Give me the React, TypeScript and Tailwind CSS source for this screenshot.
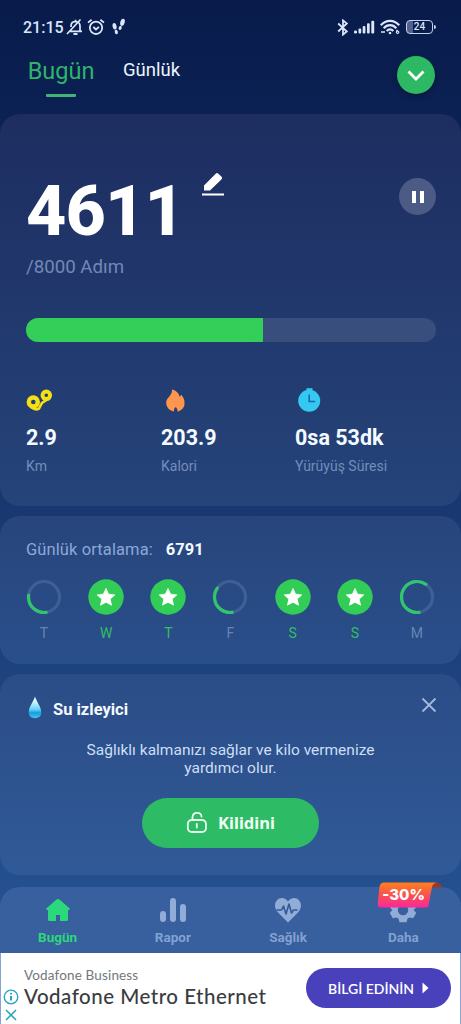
import React from 'react';

const days = [
  { label: 'T', progress: 0.29 },
  { label: 'W', progress: 1 },
  { label: 'T', progress: 1 },
  { label: 'F', progress: 0.37 },
  { label: 'S', progress: 1 },
  { label: 'S', progress: 1 },
  { label: 'M', progress: 0.62 },
];

const StatusBar: React.FC = () => (
  <div className="flex h-[54px] items-center pl-[23px] pr-[25px] text-[#dbe6fb]">
    <span className="w-[43px] whitespace-nowrap pt-px text-[16px] font-medium">21:15</span>
    {/* Muted bell */}
    <svg width="17" height="18" viewBox="0 0 17 18" className="-mt-px" fill="none" stroke="currentColor" strokeWidth="1.700">
      <path d="M4 13.300h12M14 13V8c0-2.700-1.500-4.300-4.500-4.500C6.800 3.500 5 5 5 8v1M9.500 3.500V1.800M1 16 14.500 1.500" />
      <path d="M7.500 16h4" strokeWidth="2" />
    </svg>
    {/* Alarm */}
    <svg width="18" height="18" viewBox="0 0 18 18" className="ml-[4px] -mt-px" fill="none" stroke="currentColor" strokeWidth="1.800">
      <circle cx="9" cy="9.800" r="6.200" />
      <path d="M1 4.600 4.600 1.800M17 4.600 13.400 1.800M6.300 9l2.700 2.500L12 8.800" />
    </svg>
    {/* Footsteps */}
    <svg width="14" height="17" viewBox="0 0 14 17" className="ml-[7px] -mt-px" fill="currentColor">
      <ellipse cx="2.600" cy="8.300" rx="2" ry="3.300" transform="rotate(-12 2.600 8.300)" />
      <ellipse cx="4.300" cy="14" rx="1.600" ry="2.200" transform="rotate(-12 4.300 14)" />
      <ellipse cx="10.500" cy="4.300" rx="2.200" ry="3.700" transform="rotate(14 10.500 4.300)" />
      <ellipse cx="8.200" cy="10" rx="1.500" ry="2" transform="rotate(20 8.200 10)" />
    </svg>
    <div className="ml-auto flex items-center">
      <svg width="12" height="17" viewBox="0 0 12 17" fill="none" stroke="currentColor" strokeWidth="1.800">
        <path d="m1.200 4.500 8.600 8L6 15.600V1.400l3.800 3.100-8.600 8" />
      </svg>
      <svg width="21" height="14" viewBox="0 0 21 14" className="ml-[5px]" fill="currentColor">
        <rect x="0" y="10.500" width="3" height="3" rx="1.200" />
        <rect x="4.500" y="8.500" width="2.700" height="5" rx="1" />
        <rect x="8.700" y="6" width="2.700" height="7.500" rx="1" />
        <rect x="13" y="3.300" width="2.700" height="10.200" rx="1" />
        <rect x="17.300" y="0.800" width="2.900" height="12.700" rx="1" />
      </svg>
      <svg width="20" height="16" viewBox="0 0 20 16" className="ml-[5px]" fill="none" stroke="currentColor" strokeWidth="2.200">
        <path d="M.8 6.200C6 .4 14 .4 19.200 6.200M3.700 9.200c3.600-4 9-4 12.600 0M6.700 12c2-2.200 4.600-2.200 6.600 0" />
        <circle cx="10" cy="14" r="1.300" fill="currentColor" stroke="none" />
        <circle cx="17.600" cy="13.200" r="1.200" strokeWidth="1.200" />
        <path d="M17 10.800v2M1 13h4" strokeWidth="1.400" />
      </svg>
      <div className="ml-[6px] flex h-[14px] w-[27px] items-center justify-center rounded-[4px] border-[1.5px] border-[#c5d1ec] bg-linear-to-r from-[#53628d] from-25% to-transparent to-25% text-[10px] leading-none font-medium">
        24
      </div>
      <div className="ml-px h-[4px] w-[2px] rounded-r bg-[#c5d1ec]" />
    </div>
  </div>
);

const Header: React.FC = () => (
  <div className="flex h-[60px] items-start pl-[28px] pr-[26px]">
    <div className="flex w-[66px] flex-col items-center">
      <span className="h-[40px] text-[23.500px] leading-[34px] whitespace-nowrap text-[#2fb46b]">Bugün</span>
      <div className="h-[3px] w-[30px] rounded-[1px] bg-[#40b574]" />
    </div>
    <span className="ml-[29px] text-[18.500px] leading-[33px] text-[#eaf5ff]">Günlük</span>
    <button className="mt-[2px] ml-auto flex size-[38px] items-center justify-center rounded-full bg-[#2db963] shadow-[0_2px_5px_rgba(0,0,0,0.3)]">
      <svg width="18" height="12" viewBox="0 0 18 12" className="mt-[2px]" fill="none" stroke="#fff" strokeWidth="2.800">
        <path d="m1.500 1.500 7.500 7.500 7.500-7.500" />
      </svg>
    </button>
  </div>
);

const Stat: React.FC<{ icon: React.ReactNode; value: string; label: string }> = ({ icon, value, label }) => (
  <div className="flex flex-col">
    <div className="flex h-[26px] items-center">{icon}</div>
    <span className="mt-[12px] text-[21.500px] leading-[26px] font-bold whitespace-nowrap text-[#f4faff]">{value}</span>
    <span className="mt-[6px] text-[14px] leading-[18px] whitespace-nowrap text-[#738dbb]">{label}</span>
  </div>
);

const StepsCard: React.FC = () => (
  <section className="h-[392px] rounded-[20px] bg-linear-to-b from-[#1d2d60] to-[#25447a] pl-[26px] pr-[25px] pt-[56px]">
    <div className="flex h-[79px] items-start">
      <h1 className="mt-[4px] w-[166px] text-[70px] leading-[74px] font-extrabold tracking-[-0.900px] text-white">4611</h1>
      <svg width="23" height="25" viewBox="0 0 23 25" className="mt-[2px] ml-[10px]" fill="#fff">
        <path d="M2 18.500v-5L13.700 1.700q1.300-1.200 2.600 0l3.300 3.100q1.200 1.200 0 2.400L8 18.500zM0 21.500h22v2H0z" />
      </svg>
      <button className="mt-[8px] ml-auto flex size-[37px] items-center justify-center gap-[4px] rounded-full bg-[#4b5b86]">
        <span className="h-[12px] w-[4px] bg-white" />
        <span className="h-[12px] w-[4px] bg-white" />
      </button>
    </div>
    <p className="mt-[6px] text-[18.700px] leading-[24px] text-[#7288b8]">/8000 Adım</p>
    <div className="mt-[39px] h-[24px] overflow-hidden rounded-full bg-[#384e7c]">
      <div className="h-full w-[237px] bg-[#34cf59]" />
    </div>
    <div className="mt-[45px] grid grid-cols-[135px_134px_auto]">
      <Stat
        value="2.9"
        label="Km"
        icon={
          <svg width="27" height="26" viewBox="0 0 27 26" fill="none" stroke="#f5df16">
            <path d="M4 19q4.500 5 9 2.500l3-5.500 6-4" strokeWidth="2.600" />
            <circle cx="7.300" cy="15" r="4.500" strokeWidth="4.400" />
            <circle cx="20.300" cy="8.300" r="3.800" strokeWidth="4" />
          </svg>
        }
      />
      <Stat
        value="203.9"
        label="Kalori"
        icon={
          <svg width="24" height="25" viewBox="0 0 24 25" className="ml-[4px]" fill="#ff9650">
            <path d="M7 1.500c5 1.200 7.500 5 7.700 7.500l1.600-2.300c3.200 4 3.300 6.300 3.200 9.300-.4 4-3.100 6.800-7 7.500.2-2-.3-3-1.900-4.600-1.300 1.300-1.900 2.600-1.600 4.600C4.200 22.500 1 19 1.200 14.200 1.500 9.700 7.700 7 7 1.500z" />
          </svg>
        }
      />
      <Stat
        value="0sa 53dk"
        label="Yürüyüş Süresi"
        icon={
          <svg width="24" height="26" viewBox="0 0 24 26" className="ml-[3px]">
            <path d="M8.500 1.200h6v4h-6z" fill="#35c8f0" />
            <circle cx="11.200" cy="13.700" r="11" fill="#35c8f0" />
            <path d="M11.200 7.500V14.500h6" fill="none" stroke="#176ab0" strokeWidth="1.600" />
          </svg>
        }
      />
    </div>
  </section>
);

const Day: React.FC<{ label: string; progress: number }> = ({ label, progress }) => {
  const done = progress === 1;
  return (
    <div className="flex w-[36px] flex-col items-center">
      <svg width="36" height="36" viewBox="0 0 36 36">
        {done ? (
          <>
            <circle cx="18" cy="18" r="17.700" fill="#32cd57" />
            <path d="m18 9.500 2.600 5.700 6.200.7-4.600 4.200 1.300 6.100L18 23.200l-5.500 3 1.300-6.100-4.600-4.200 6.200-.7z" fill="#fff" stroke="#fff" strokeWidth="0.800" strokeLinejoin="round" />
          </>
        ) : (
          <g fill="none" strokeWidth="3.200">
            <circle cx="18" cy="18" r="15.500" stroke="#405f96" />
            <circle cx="18" cy="18" r="15.500" stroke="#31c66c" pathLength="1" strokeDasharray={`${progress} 1`} strokeLinecap="round" transform="rotate(82 18 18)" />
          </g>
        )}
      </svg>
      <span className={`mt-[9px] text-[14px] leading-[18px] ${done ? 'text-[#34bd65]' : 'text-[#6784b6]'}`}>{label}</span>
    </div>
  );
};

const WeekCard: React.FC = () => (
  <section className="mt-[10px] h-[148px] rounded-[20px] bg-linear-to-b from-[#28457c] to-[#294f8b] px-[26px] pt-[23px]">
    <p className="flex items-center text-[16.500px] leading-[22px] text-[#8ca8d9]">
      <span className="tracking-[0.100px]">Günlük ortalama:</span>
      <b className="ml-[13px] text-[#f4faff]">6791</b>
    </p>
    <div className="mt-[18px] flex justify-between">
      {days.map((day, i) => (
        <Day key={i} {...day} />
      ))}
    </div>
  </section>
);

const WaterCard: React.FC = () => (
  <section className="mt-[10px] h-[201px] rounded-[20px] bg-linear-to-b from-[#2b4c87] to-[#305a97] pt-[22px]">
    <div className="flex h-[28px] items-start pl-[28px] pr-[24px]">
      <svg width="14" height="23" viewBox="0 0 14 23">
        <defs>
          <linearGradient id="drop" x1="0" y1="0" x2="0" y2="1">
            <stop offset="0.200" stopColor="#dcf9ff" />
            <stop offset="0.600" stopColor="#65d1f6" />
            <stop offset="0.750" stopColor="#159ddf" />
            <stop offset="1" stopColor="#48c2ef" />
          </linearGradient>
        </defs>
        <path d="M7 .5C9 6.500 13.300 11 13.300 16.500c0 3.600-2.500 5.700-6.300 5.700S.7 20 .7 16.500C.7 11 5 6.500 7 .5z" fill="url(#drop)" />
      </svg>
      <h2 className="mt-[3px] ml-[11px] text-[16.500px] leading-[22px] font-bold text-[#f4faff]">Su izleyici</h2>
      <svg width="16" height="16" viewBox="0 0 16 16" className="mt-[1px] ml-auto" stroke="#a3b8dd" strokeWidth="1.800">
        <path d="m1.500 1.500 13 13m0-13-13 13" />
      </svg>
    </div>
    <p className="mx-auto mt-[17px] w-[300px] text-center text-[15.500px] leading-[18px] text-[#ccdff5]">
      Sağlıklı kalmanızı sağlar ve kilo vermenize yardımcı olur.
    </p>
    <button className="mx-auto mt-[21px] flex h-[50px] w-[177px] items-center justify-center rounded-full bg-[#2dbb65] font-['Noto_Sans'] text-[16.500px] font-bold text-[#f0fff4]">
      <svg width="22" height="23" viewBox="0 0 22 23" className="mr-[10px] -mt-px" fill="none" stroke="#eaffee" strokeWidth="1.800" strokeLinecap="round">
        <rect x="1.800" y="9" width="18.200" height="12" rx="4" />
        <path d="M6.500 9V6C6.800.5 15.200.5 15.500 5.500M10.800 13v3.500" />
      </svg>
      Kilidini
    </button>
  </section>
);

const NavItem: React.FC<{ label: string; active?: boolean; children: React.ReactNode }> = ({ label, active, children }) => (
  <div className={`relative flex w-1/4 flex-col items-center pt-[10px] ${active ? 'text-[#2cd87c]' : 'text-[#82a2d2]'}`}>
    <svg width="28" height="26" viewBox="0 0 28 26">{children}</svg>
    <span className="mt-[5px] text-[13.500px] leading-[18px] font-bold">{label}</span>
  </div>
);

const BottomNav: React.FC = () => (
  <nav className="relative mt-[12px] flex h-[66px] rounded-t-[20px] bg-[#385f9e]">
    <NavItem label="Bugün" active>
      <path d="M12.500 2.500q1.500-1.200 3 0l10 8.800q1 1.400-.7 1.700h-.8v9.500q0 1.500-1.500 1.500H16v-6h-4v6H5.500q-1.500 0-1.500-1.500V13h-1q-1.500-.3-.5-1.700z" fill="currentColor" />
    </NavItem>
    <NavItem label="Rapor">
      <g fill="#91acd7">
        <rect x="1" y="14" width="6" height="11" rx="3" />
        <rect x="11" y="1" width="6" height="24" rx="3" />
        <rect x="21" y="7" width="6" height="18" rx="3" />
      </g>
    </NavItem>
    <NavItem label="Sağlık">
      <path d="M14 25.500 4 15.500C-2 9 2 1 7.800 1 10.500 1 12.500 2.300 14 4.500 15.500 2.300 17.500 1 20.200 1 26 1 30 9 24 15.500z" fill="#91acd7" />
      <path d="M2.500 13h5l2-4 2.500 8 3-10 2.500 9 2-3h4" fill="none" stroke="#335a99" strokeWidth="1.600" strokeLinejoin="round" />
    </NavItem>
    <NavItem label="Daha">
      <path d="m10.500 1h7l1 3.500 2.200 1.300 3.500-.9 3 5.300-2.500 2.800 2.500 3-3 5.300-3.500-.9-2.200 1.200-1 3.700h-7l-1-3.700-2.200-1.200-3.500.9-3-5.300 2.500-3L.8 10.200l3-5.300 3.500.9 2.200-1.300zM14 7.800a5.200 5.200 0 1 0 0 10.400 5.200 5.200 0 0 0 0-10.400" fill="#91acd7" fillRule="evenodd" />
    </NavItem>
    {/* Discount ribbon */}
    <div className="absolute -top-[5px] left-[377px] h-[26px] w-[66px]">
      <svg width="66" height="26" viewBox="0 0 66 26" className="absolute inset-0">
        <defs>
          <linearGradient id="ribbon" x1="0" y1="0" x2="0" y2="1">
            <stop offset="0" stopColor="#ff821d" />
            <stop offset="0.450" stopColor="#fa5647" />
            <stop offset="1" stopColor="#fb279c" />
          </linearGradient>
        </defs>
        <path d="M53 1h7q5 0 4.500 4.500H55z" fill="#a33720" />
        <path d="M7 .5h53q-4 .5-5 4.500l-4 20.500H4Q.5 25.500.7 22L2.500 5Q3 .5 7 .5z" fill="url(#ribbon)" />
      </svg>
      <span className="relative block w-[53px] pt-[2px] text-center font-[Inter] text-[15px] leading-[22px] font-extrabold text-white">-30%</span>
    </div>
  </nav>
);

const AdBanner: React.FC = () => (
  <div className="flex h-[71px] border-x border-[#85a6d4] bg-white pt-[12px] pr-[9px]">
    <div className="flex w-[23px] flex-col items-center pr-[3px] pt-[24px]">
      <svg width="16" height="16" viewBox="0 0 16 16" fill="none" stroke="#27a4bf" strokeWidth="1.300">
        <circle cx="8" cy="8" r="6.800" />
        <path d="M8 7v4.500M8 4v1.500" strokeWidth="2" />
      </svg>
      <svg width="12" height="12" viewBox="0 0 12 12" className="mt-[4px]" stroke="#27a4bf" strokeWidth="1.500">
        <path d="m1 1 10 10m0-10L1 11" />
      </svg>
    </div>
    <div className="font-[Lato] whitespace-nowrap">
      <p className="text-[13.500px] leading-[21px] tracking-[0.150px] text-[#73777d]">Vodafone Business</p>
      <p className="text-[20.500px] leading-[21px] font-medium tracking-[0.500px] text-[#3b3c40]">Vodafone Metro Ethernet</p>
    </div>
    <button className="mt-[3px] ml-auto flex h-[40px] w-[145px] items-center justify-center rounded-full bg-[#4941bc] font-[Lato] text-[14px] font-semibold whitespace-nowrap text-white">
      BİLGİ EDİNİN
      <svg width="7" height="12" viewBox="0 0 7 12" className="ml-[8px]" fill="#fff">
        <path d="m.5.500 6 5.500-6 5.500z" />
      </svg>
    </button>
  </div>
);

export default function App() {
  return (
    <main className="h-[1024px] w-[461px] overflow-hidden bg-linear-to-b from-[#081b4b] via-[#193871] to-[#28599c] font-[Roboto,sans-serif]">
      <StatusBar />
      <Header />
      <StepsCard />
      <WeekCard />
      <WaterCard />
      <BottomNav />
      <AdBanner />
    </main>
  );
}
